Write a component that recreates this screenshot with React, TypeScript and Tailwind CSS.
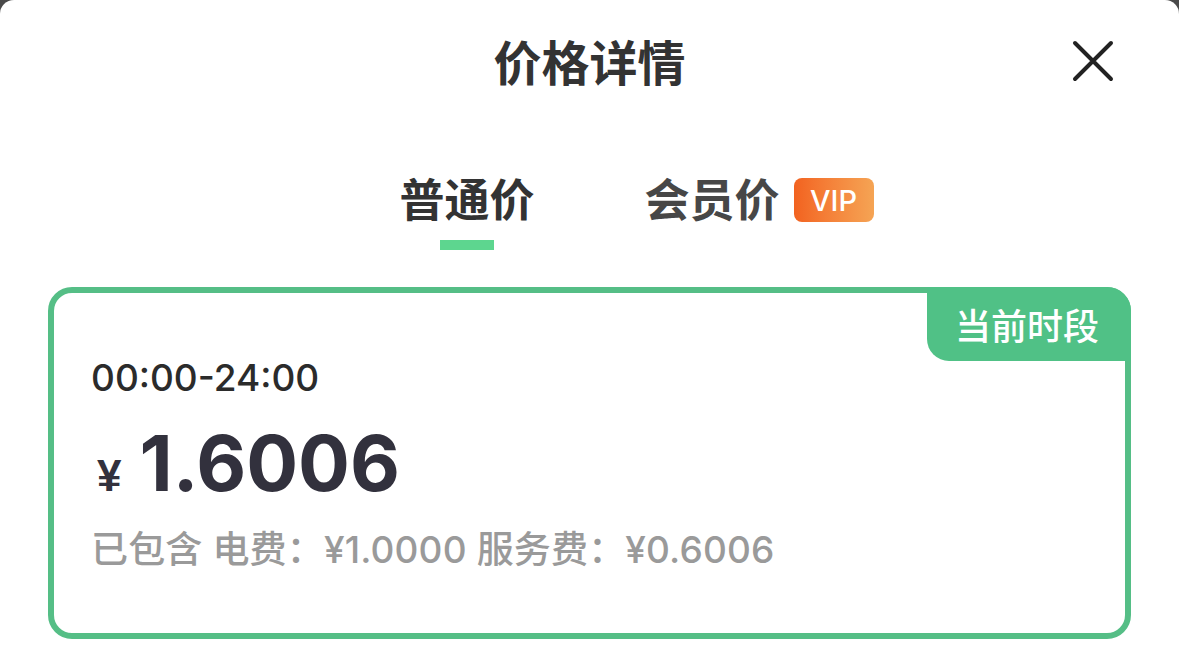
import React from "react";

const CJK = { fontFamily: '"Noto Sans CJK SC", "Noto Sans", sans-serif' };
const MIX = { fontFamily: 'Inter, "Noto Sans CJK SC", sans-serif' };

export default function App() {
  return (
    <div className="w-[1179px] h-[663px] overflow-hidden bg-[#4a4a4a]">
      <div className="relative h-full w-full rounded-t-[14px] bg-white">
        {/* Header */}
        <div className="relative flex h-[119px] items-center justify-center">
          <div className="text-[48px] leading-[48px] font-bold text-[#333333]" style={CJK}>
            价格详情
          </div>
          <svg
            className="absolute right-[65px] top-[40px]"
            width="42"
            height="42"
            viewBox="0 0 42 42"
            fill="none"
          >
            <path d="M3 3 L39 39 M39 3 L3 39" stroke="#222222" strokeWidth="4" strokeLinecap="round" />
          </svg>
        </div>

        {/* Tabs */}
        <div className="mt-[56px] flex justify-center">
          <div className="flex w-[245px] flex-col items-center">
            <div className="text-[45px] leading-[45px] font-bold text-[#333333]" style={CJK}>
              普通价
            </div>
            <div className="mt-[20px] h-[10px] w-[54px] bg-[#5dd68f]" />
          </div>
          <div className="flex w-[245px] flex-col items-center">
            <div className="relative text-[45px] leading-[45px] font-bold text-[#474747]" style={CJK}>
              会员价
              <div
                className="absolute left-full top-[3px] ml-[14px] flex h-[44px] w-[80px] items-center justify-center rounded-[8px] bg-gradient-to-r from-[#f2621f] to-[#f5a454] text-[29px] font-medium leading-none text-white"
                style={{ fontFamily: "Inter, sans-serif" }}
              >
                VIP
              </div>
            </div>
          </div>
        </div>

        {/* Card */}
        <div className="relative ml-[48px] mt-[37px] h-[352px] w-[1083px] rounded-[24px] border-[6px] border-[#55be86] bg-white">
          <div
            className="absolute -right-[6px] -top-[6px] flex h-[74px] w-[204px] items-center justify-center rounded-bl-[22px] rounded-tr-[24px] bg-[#50c186] text-[36px] font-medium leading-none text-white"
            style={CJK}
          >
            <span className="-ml-[4px]">当前时段</span>
          </div>
          <div className="flex flex-col pl-[37px] pt-[63px]">
            <div className="text-[37px] leading-[44px] font-medium text-[#2b2b2b]" style={MIX}>
              00:00-24:00
            </div>
            <div className="mt-[25px] flex items-baseline text-[#32313d]">
              <span
                className="ml-[6px] mr-[18px] text-[44px] font-bold leading-none"
                style={{ fontFamily: '"Liberation Sans", Arial, sans-serif' }}
              >
                ¥
              </span>
              <span
                className="text-[77px] font-bold leading-[76px]"
                style={{ fontFamily: "Inter, sans-serif" }}
              >
                1.6006
              </span>
            </div>
            <div
              className="mt-[29px] text-[37px] leading-[40px] font-medium tracking-[0.15px] text-[#9a9a9a]"
              style={MIX}
            >
              已包含 电费：¥1.0000 服务费：¥0.6006
            </div>
          </div>
        </div>
      </div>
    </div>
  );
}
